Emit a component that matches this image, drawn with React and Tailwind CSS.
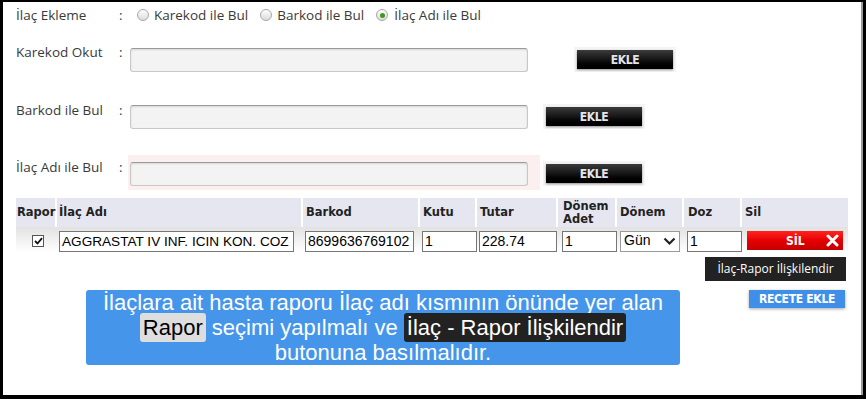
import React from "react";

function Radio({ checked }) {
  return (
    <span className="relative inline-flex w-[12px] h-[12px] rounded-full border border-[#a7a7a7] bg-gradient-to-b from-[#fdfdfd] to-[#dcdcdc] items-center justify-center">
      {checked && <span className="w-[5px] h-[5px] rounded-full bg-[#3c9a1f]"></span>}
    </span>
  );
}

function EkleButton() {
  return (
    <div className="p-[3px] bg-[#f4f4f4]">
      <div className="w-[96px] h-[19px] bg-gradient-to-b from-[#3c3c3c] via-[#161616] to-[#000] shadow-[0_1px_2px_rgba(0,0,0,0.4)] flex items-center justify-center text-[12px] font-bold text-[#e4e4ec] font-['DejaVu_Sans_Condensed',sans-serif] tracking-[-0.4px]">
        EKLE
      </div>
    </div>
  );
}

function TextBox() {
  return (
    <div className="w-[398px] h-[24px] rounded-[3px] border border-[#c8c8c8] border-t-[#9a9a9a] bg-[#f3f3f3] shadow-[inset_0_1px_2px_rgba(0,0,0,0.12)]"></div>
  );
}

function Cell({ children, className = "" }) {
  return (
    <div className={`h-[21px] border border-[#767676] bg-white leading-[19px] pl-[2px] text-black font-['Liberation_Sans',sans-serif] whitespace-nowrap overflow-hidden ${className}`}>
      {children}
    </div>
  );
}

export default function App() {
  return (
    <div className="w-[866px] h-[399px] bg-white border-black border-l-[3px] border-t-2 border-r-[3px] border-b-4 overflow-hidden font-['Open_Sans',sans-serif] text-[13.5px] text-[#3a3a3a]">
      <div className="h-full border-r-2 border-[#9a9a9a] pl-[13px] pt-[4px]">
        {/* ilac ekleme secimi */}
        <div className="flex items-center h-[18px] leading-[18px]">
          <div className="w-[103px]">İlaç Ekleme</div>
          <div className="w-[18px]">:</div>
          <Radio />
          <span className="ml-[5px] mr-[12px]">Karekod ile Bul</span>
          <Radio />
          <span className="ml-[5px] mr-[12px]">Barkod ile Bul</span>
          <Radio checked />
          <span className="ml-[6px]">İlaç Adı ile Bul</span>
        </div>

        {/* karekod */}
        <div className="flex items-start mt-[19px] leading-[18px]">
          <div className="w-[103px]">Karekod Okut</div>
          <div className="w-[11px]">:</div>
          <div className="mt-[5px]">
            <TextBox />
          </div>
          <div className="ml-[46px] mt-[4px]">
            <EkleButton />
          </div>
        </div>

        {/* barkod */}
        <div className="flex items-start mt-[29px] leading-[18px]">
          <div className="w-[103px]">Barkod ile Bul</div>
          <div className="w-[11px]">:</div>
          <div className="mt-[4px]">
            <TextBox />
          </div>
          <div className="ml-[15px] mt-[3px]">
            <EkleButton />
          </div>
        </div>

        {/* ilac adi */}
        <div className="flex items-start mt-[26px] leading-[18px]">
          <div className="w-[103px] mt-[3px]">İlaç Adı ile Bul</div>
          <div className="w-[9px] mt-[3px]">:</div>
          <div className="bg-[#fcefef] pt-[7px] pl-[2px] pr-[12px] pb-[4px]">
            <TextBox />
          </div>
          <div className="ml-[3px] mt-[6px]">
            <EkleButton />
          </div>
        </div>

        {/* tablo */}
        <div className="mt-[8px] w-[832px] font-['DejaVu_Sans',sans-serif]">
          <div className="grid grid-cols-[39px_244px_115px_55px_79px_57px_65px_56px_106px] gap-x-[2px] h-[29px] text-[11.5px] font-bold text-[#222]">
            <div className="bg-[#e6e6f0] flex items-center pl-[1px]">Rapor</div>
            <div className="bg-[#e6e6f0] flex items-center pl-[2px]">İlaç Adı</div>
            <div className="bg-[#e6e6f0] flex items-center pl-[3px]">Barkod</div>
            <div className="bg-[#e6e6f0] flex items-center pl-[3px]">Kutu</div>
            <div className="bg-[#e6e6f0] flex items-center pl-[3px]">Tutar</div>
            <div className="bg-[#e6e6f0] flex items-center pl-[5px] leading-[13px]">Dönem<br />Adet</div>
            <div className="bg-[#e6e6f0] flex items-center pl-[3px]">Dönem</div>
            <div className="bg-[#e6e6f0] flex items-center pl-[4px]">Doz</div>
            <div className="bg-[#e6e6f0] flex items-center pl-[3px]">Sil</div>
          </div>
          <div className="grid grid-cols-[39px_244px_115px_55px_79px_57px_65px_56px_106px] gap-x-[2px] h-[25px] pt-[4px] bg-gradient-to-b from-[#e2e2e2] to-[#ffffff]">
            <div className="pl-[16px] pt-[4px]">
              <div className="w-[12px] h-[12px] border border-[#555] bg-white flex items-center justify-center">
                <svg width="9" height="8" viewBox="0 0 9 8">
                  <path d="M1 4 L3.5 6.5 L8 1.2" fill="none" stroke="#111" strokeWidth="1.8" />
                </svg>
              </div>
            </div>
            <div className="pl-[2px]">
              <Cell className="w-[235px] text-[13.6px]">AGGRASTAT IV INF. ICIN KON. COZ</Cell>
            </div>
            <div className="pl-[2px]">
              <Cell className="w-[109px] text-[14px]">8699636769102</Cell>
            </div>
            <div className="pl-[2px]">
              <Cell className="w-[55px] text-[14px]">1</Cell>
            </div>
            <div className="pl-[2px]">
              <Cell className="w-[78px] text-[14px]">228.74</Cell>
            </div>
            <div className="pl-[4px]">
              <Cell className="w-[55px] text-[14px]">1</Cell>
            </div>
            <div className="pl-[3px]">
              <div className="w-[60px] h-[21px] border border-[#9a9a9a] bg-white flex items-center justify-between pl-[3px] pr-[3px] text-[14px] text-black font-['Liberation_Sans',sans-serif]">
                <span className="-mt-[2px]">Gün</span>
                <svg width="13" height="9" viewBox="0 0 13 9">
                  <path d="M1.5 1.5 L6.5 6.5 L11.5 1.5" fill="none" stroke="#222" strokeWidth="2.2" />
                </svg>
              </div>
            </div>
            <div className="pl-[3px]">
              <Cell className="w-[55px] text-[14px]">1</Cell>
            </div>
            <div className="pl-[5px]">
              <div className="w-[96px] h-[19px] bg-gradient-to-b from-[#ff2020] via-[#e60000] to-[#c40000] flex items-center text-white font-bold font-['DejaVu_Sans_Condensed',sans-serif] text-[12px]">
                <span className="ml-[39px]">SİL</span>
                <svg className="ml-[21px]" width="13" height="13" viewBox="0 0 13 13">
                  <path d="M2 2 L11 11 M11 2 L2 11" stroke="#fff" strokeWidth="3" strokeLinecap="round" />
                </svg>
              </div>
            </div>
          </div>
        </div>

        {/* iliskilendir */}
        <div className="flex justify-end w-[830px] mt-[5px]">
          <div className="w-[141px] h-[24px] bg-[#222222] text-white text-[12px] flex items-center justify-center">
            İlaç-Rapor İlişkilendir
          </div>
        </div>

        {/* bilgi ve recete */}
        <div className="flex items-start mt-[9px]">
          <div className="ml-[70px] w-[594px] h-[75px] rounded-[3px] bg-[#4596ea] text-white text-center text-[22px] leading-[25px] font-['Liberation_Sans',sans-serif]">
            <div>İlaçlara ait hasta raporu İlaç adı kısmının önünde yer alan</div>
            <div>
              <span className="bg-[#dedede] text-black rounded-[3px] px-[3px] py-[2px]">Rapor</span>
              {" "}seçimi yapılmalı ve{" "}
              <span className="bg-[#222222] text-white rounded-[3px] px-[3px] py-[2px]">İlaç - Rapor İlişkilendir</span>
            </div>
            <div>butonuna basılmalıdır.</div>
          </div>
          <div className="ml-[69px] w-[96px] h-[18px] bg-[#3f8fe8] shadow-[0_1px_3px_rgba(0,0,0,0.35)] text-white font-bold text-[12px] font-['DejaVu_Sans_Condensed',sans-serif] flex items-center justify-center tracking-[-0.3px]">
            RECETE EKLE
          </div>
        </div>
      </div>
    </div>
  );
}
